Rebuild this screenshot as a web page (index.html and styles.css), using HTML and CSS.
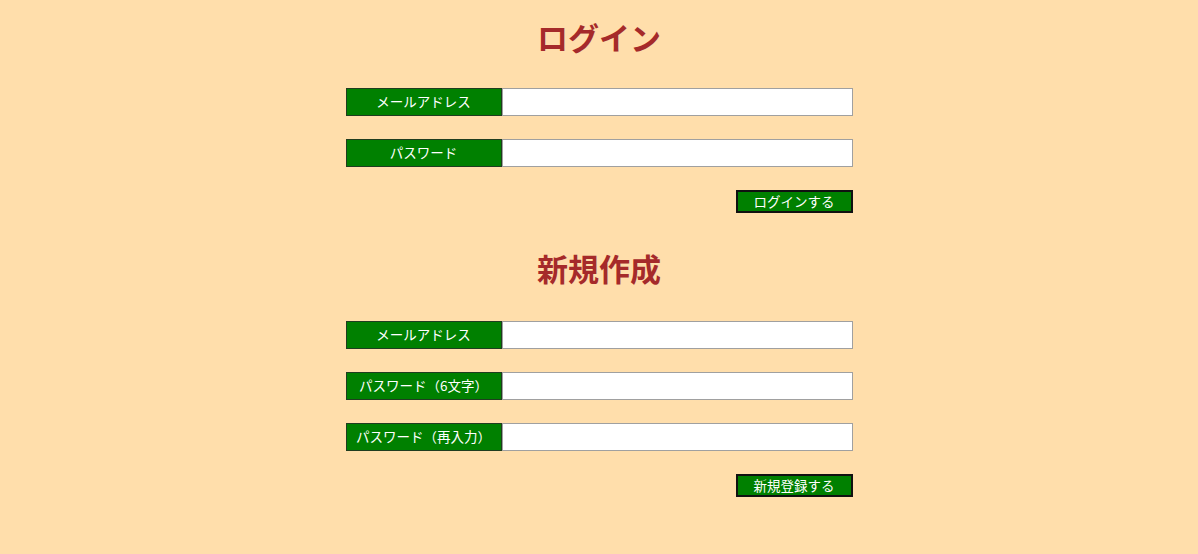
FILE: index.html
```html
<!DOCTYPE html>
<html lang="ja">
<head>
<meta charset="utf-8">
<title>ログイン</title>
<link rel="stylesheet" href="styles.css">
</head>
<body>
<main class="page">
  <section class="block">
    <h1 class="title">ログイン</h1>
    <form class="form">
      <div class="row"><label class="label">メールアドレス</label><input class="input" type="text"></div>
      <div class="row"><label class="label">パスワード</label><input class="input" type="password"></div>
      <div class="actions"><button class="btn" type="button">ログインする</button></div>
    </form>
  </section>
  <section class="block">
    <h1 class="title">新規作成</h1>
    <form class="form">
      <div class="row"><label class="label">メールアドレス</label><input class="input" type="text"></div>
      <div class="row"><label class="label">パスワード（6文字）</label><input class="input" type="password"></div>
      <div class="row"><label class="label">パスワード（再入力）</label><input class="input" type="password"></div>
      <div class="actions"><button class="btn" type="button">新規登録する</button></div>
    </form>
  </section>
</main>
</body>
</html>
```
FILE: styles.css
```css
* { box-sizing: border-box; }
html, body { margin: 0; padding: 0; }
body {
  background: #ffdeab;
  font-family: "Noto Sans CJK JP", "Noto Sans", sans-serif;
  width: 1198px;
  height: 554px;
}
.page {
  width: 507px;
  margin: 0 auto;
  padding-top: 17px;
}
.title {
  margin: 0 0 31px;
  text-align: center;
  color: #a52a2a;
  font-size: 31px;
  line-height: 40px;
  font-weight: bold;
}
.block + .block { margin-top: 35px; }
.block + .block .title { margin-bottom: 33px; }
.form {
  display: flex;
  flex-direction: column;
  gap: 23px;
}
.row {
  display: flex;
  height: 28px;
}
.label {
  width: 156px;
  height: 28px;
  background: #008000;
  border: 1px solid #1f3d1f;
  color: #fff;
  font-size: 13.5px;
  display: flex;
  align-items: center;
  justify-content: center;
  padding-bottom: 2px;
}
.input {
  width: 351px;
  height: 28px;
  margin: 0;
  background: #fff;
  border: 1px solid #a0a0a0;
  outline: none;
  padding: 0 4px;
}
.actions {
  display: flex;
  justify-content: flex-end;
}
.btn {
  width: 117px;
  height: 23px;
  margin: 0;
  padding: 0 0 1px;
  background: #008000;
  border: 2px solid #111;
  color: #fff;
  font-family: inherit;
  font-size: 13.5px;
  line-height: 18px;
}
```
